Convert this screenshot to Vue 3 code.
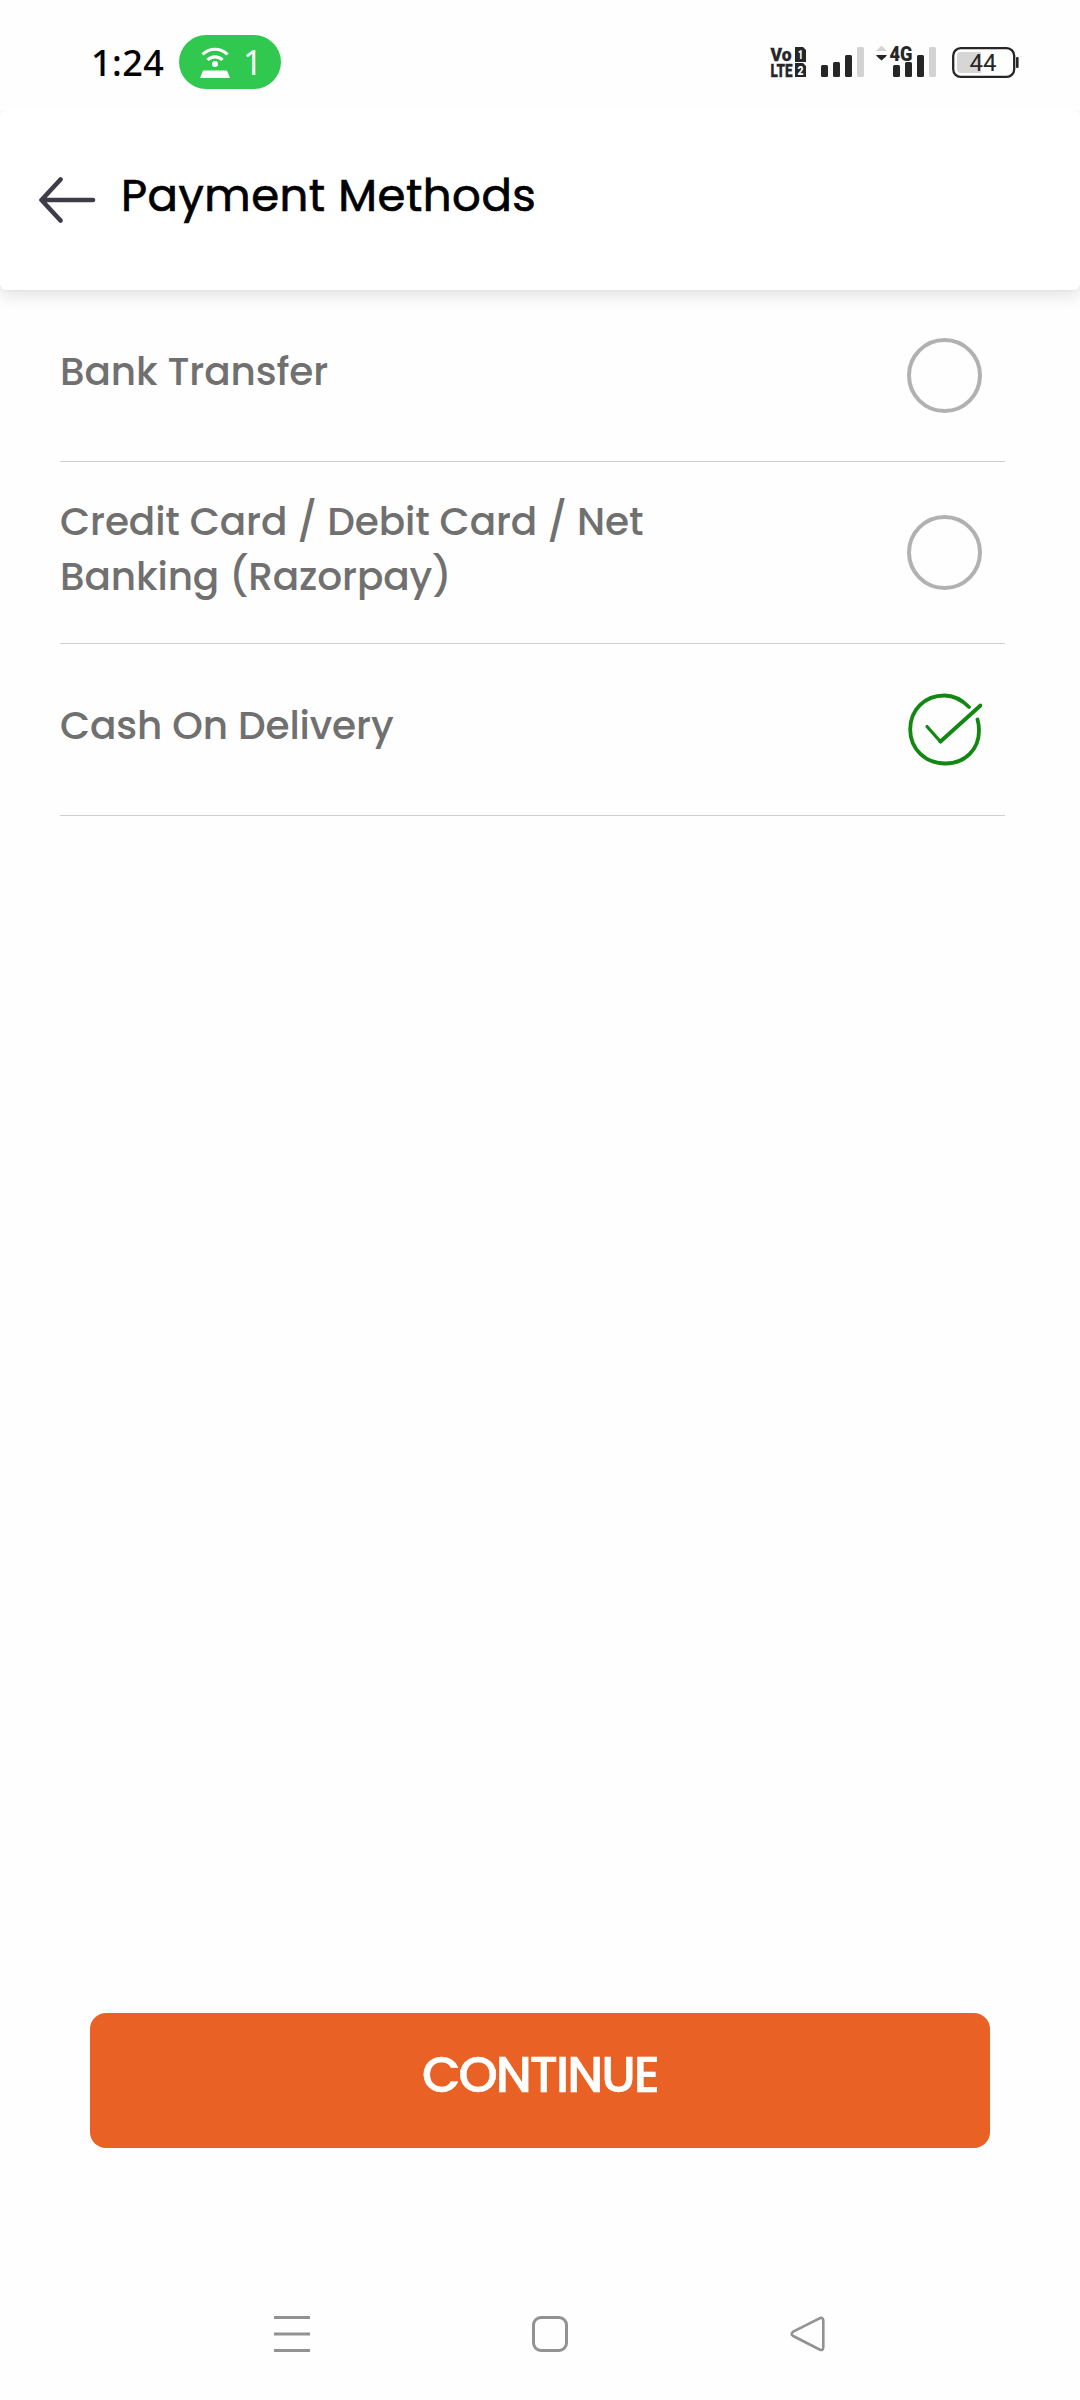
<template>
  <div class="screen">
    <div class="statusbar">
      <span class="time">1:24</span>
      <div class="hotspot">
        <svg class="hotspot-icon" width="32" height="34" viewBox="0 0 32 34">
          <path d="M3.5 9.5a17.5 17.5 0 0 1 25 0M8.5 15a10.5 10.5 0 0 1 15 0" fill="none" stroke="#fff" stroke-width="3.2" />
          <circle cx="16" cy="19" r="3" fill="#fff" />
          <path d="M5 25.500h22q1 0 1.400 1l2.600 6.500H1l2.600-6.500q.4-1 1.400-1z" fill="#fff" />
        </svg>
        <span class="hotspot-count">1</span>
      </div>
      <svg class="system" width="250" height="48" viewBox="770 38 250 48">
        <g fill="#262626" class="volte">
          <text x="770.500" y="61" font-size="18.500" stroke="#262626" stroke-width="0.3" textLength="21" lengthAdjust="spacingAndGlyphs">Vo</text>
          <text x="770.500" y="77" font-size="19" stroke="#262626" stroke-width="0.3" textLength="22" lengthAdjust="spacingAndGlyphs">LTE</text>
          <path d="M795 47h8l3 3v12h-11zM795 63h8l3 3v11h-11z" />
          <text x="798" y="59" font-size="12" fill="#fff" textLength="5" lengthAdjust="spacingAndGlyphs">1</text>
          <text x="797.500" y="74.500" font-size="12" fill="#fff" textLength="6" lengthAdjust="spacingAndGlyphs">2</text>
        </g>
        <rect v-for="bar in bars" :key="bar.x" :x="bar.x" :y="bar.y" width="7" :height="77 - bar.y" rx="1.500" :fill="bar.fill" />
        <path d="M876 51l5.500-5.500 5.500 5.500z" fill="#d3d3d3" />
        <path d="M876 55h11l-1.500 2-4 3.500-4-3.500z" fill="#262626" />
        <text class="volte" x="889.500" y="60.500" font-size="20.500" fill="#262626" textLength="23" lengthAdjust="spacingAndGlyphs">4G</text>
        <rect x="953.200" y="48.200" width="61" height="28.600" rx="7.500" fill="none" stroke="#262626" stroke-width="2.300" />
        <path d="M961 52h20v21h-20q-4 0-4-4v-13q0-4 4-4z" fill="#d6d6d6" />
        <rect x="1016" y="57" width="2.600" height="11" rx="1" fill="#262626" />
        <text class="level" x="969.500" y="71" font-size="23" fill="#262626" textLength="27" lengthAdjust="spacingAndGlyphs">44</text>
      </svg>
    </div>

    <header class="header">
      <svg class="back" width="58" height="46" viewBox="0 0 58 46">
        <path d="M55 23H3.500M22.500 2.500L3.500 23l19 20.500" fill="none" stroke="#3d3c48" stroke-width="4.600" stroke-linecap="round" stroke-linejoin="round" />
      </svg>
      <h1 class="title">Payment Methods</h1>
    </header>

    <ul class="methods">
      <li v-for="method in methods" :key="method.id" class="method" @click="selected = method.id">
        <span class="name">{{ method.name }}</span>
        <svg v-if="selected === method.id" class="mark" width="75" height="75" viewBox="0 0 75 75">
          <path d="M62 15C54 7 46 3.500 37.500 3.500C17.500 3.500 3.200 18 3.200 37.500S18.500 71.500 38.500 71.500S72 57 72 38.500Q72 32.500 70.500 27.500" fill="none" stroke="#128712" stroke-width="3.800" stroke-linecap="round" />
          <path d="M20 34.500L33.500 49.800" stroke="#128712" stroke-width="3.200" stroke-linecap="round" />
          <path d="M33.500 49.500L73.500 13.500" stroke="#128712" stroke-width="3.900" stroke-linecap="round" />
        </svg>
        <span v-else class="radio"></span>
      </li>
    </ul>

    <button class="continue" type="button">CONTINUE</button>

    <nav class="navbar">
      <svg width="36" height="36" viewBox="0 0 36 36">
        <path d="M0 1.500h36M0 18h36M0 34.500h36" stroke="#929292" stroke-width="3" />
      </svg>
      <svg width="36" height="36" viewBox="0 0 36 36">
        <rect x="1.500" y="1.500" width="33" height="33" rx="7.500" fill="none" stroke="#929292" stroke-width="3" />
      </svg>
      <svg width="36" height="36" viewBox="0 0 36 36">
        <path d="M29.500 2.300L3.200 15.700Q0 18 3.200 20L29.500 33.500Q33 35 33.300 31.500V4.300Q33 .8 29.500 2.300z" fill="none" stroke="#929292" stroke-width="2.600" />
      </svg>
    </nav>
  </div>
</template>

<script setup>
import { ref } from "vue";

const selected = ref("cod");

const methods = [
  { id: "bank", name: "Bank Transfer" },
  { id: "card", name: "Credit Card / Debit Card / Net Banking (Razorpay)" },
  { id: "cod", name: "Cash On Delivery" },
];

// signal strength of both SIMs, last bar is off
const bars = [821, 893].flatMap((start) =>
  [65, 62, 55, 47].map((y, i) => ({
    x: start + i * 12,
    y,
    fill: i === 3 ? "#d3d3d3" : "#262626",
  }))
);
</script>

<style>
body {
  margin: 0;
  background: #fefefe;
}
</style>

<style scoped>
.screen {
  display: flex;
  flex-direction: column;
  width: 1080px;
  height: 2400px;
  background: #fefefe;
  font-family: Poppins, Inter, sans-serif;
}

.statusbar {
  display: flex;
  align-items: center;
  box-sizing: border-box;
  height: 110px;
  padding: 14px 60px 0 91px;
}

.time {
  width: 88px;
  font-family: "Noto Sans", sans-serif;
  font-size: 36px;
  font-weight: 500;
  letter-spacing: 0.4px;
  color: #000;
}

.hotspot {
  display: flex;
  align-items: center;
  box-sizing: border-box;
  width: 102px;
  height: 54px;
  padding-left: 20px;
  border-radius: 27px;
  background: #30c84f;
}

.hotspot-count {
  margin-left: 12px;
  font-family: "Noto Sans", sans-serif;
  font-size: 34px;
  line-height: 54px;
  color: #fff;
}

.system {
  margin: -1px 0 0 auto;
  overflow: visible;
}

.volte {
  font-family: Roboto, sans-serif;
  font-weight: 900;
}

.level {
  font-family: Roboto, sans-serif;
}

.header {
  display: flex;
  align-items: center;
  box-sizing: border-box;
  height: 180px;
  padding-left: 38px;
  border-radius: 6px;
  background: #fff;
  box-shadow: 0 6px 16px rgba(0, 0, 0, 0.11), 0 0 3px rgba(0, 0, 0, 0.06);
  clip-path: inset(0 0 -40px 0);
}

.title {
  margin: 0 0 9px 25px;
  font-size: 45px;
  font-weight: 400;
  letter-spacing: 0.5px;
  color: #000;
  -webkit-text-stroke: 0.7px #000;
}

.methods {
  margin: 0;
  padding: 0 75px 0 60px;
  list-style: none;
}

.method {
  display: flex;
  align-items: center;
  justify-content: space-between;
  box-sizing: border-box;
  height: 172px;
  padding-right: 23px;
  border-bottom: 1px solid #cfcfcf;
}

.method:nth-child(2) {
  height: 182px;
}

.name {
  width: 620px;
  padding-bottom: 8px;
  font-size: 39px;
  font-weight: 500;
  line-height: 55px;
  letter-spacing: -0.12px;
  color: #707070;
}

.radio {
  box-sizing: border-box;
  width: 75px;
  height: 75px;
  border: 4px solid #b1b1b1;
  border-radius: 50%;
}

.continue {
  height: 135px;
  margin: auto 90px 0;
  padding: 0 0 12px;
  border: 0;
  border-radius: 16px;
  background: #e96124;
  color: #fff;
  font-family: inherit;
  font-size: 50px;
  font-weight: 500;
  letter-spacing: -2px;
  -webkit-text-stroke: 0.6px #fff;
}

.navbar {
  display: flex;
  justify-content: space-between;
  margin-top: 168px;
  padding: 0 254px 48px 274px;
}
</style>
